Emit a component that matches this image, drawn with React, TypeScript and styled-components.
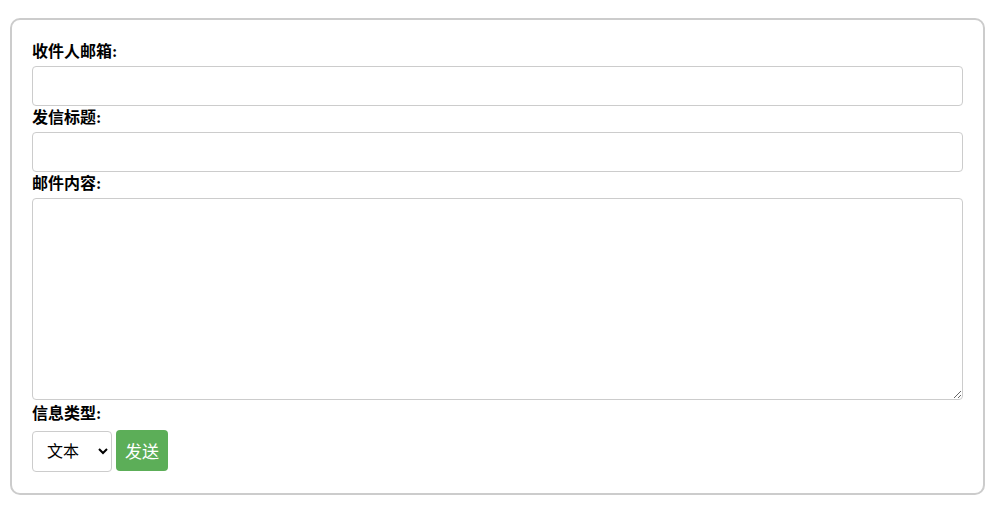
import styled, { createGlobalStyle } from "styled-components";

const GlobalStyle = createGlobalStyle`
  body {
    margin: 0;
    font-family: "Liberation Serif", "Noto Sans CJK SC", serif;
    background: #fff;
  }
`;

const Panel = styled.form`
  margin: 18px 9px 0 10px;
  padding: 20px 20px 21px;
  border: 2px solid #ccc;
  border-radius: 10px;
  display: flex;
  flex-direction: column;
`;

const Label = styled.label`
  display: block;
  font-size: 16px;
  font-weight: bold;
  line-height: 24px;
  color: #000;
  margin-bottom: 2px;
`;

const TextInput = styled.input`
  box-sizing: border-box;
  width: 100%;
  height: 40px;
  margin: 0;
  padding: 0 10px;
  border: 1px solid #ccc;
  border-radius: 4px;
  font-size: 16px;
  font-family: "Liberation Sans", "Noto Sans CJK SC", sans-serif;
`;

const TextArea = styled.textarea`
  display: block;
  box-sizing: border-box;
  width: 100%;
  height: 202px;
  margin: 0 0 2px;
  padding: 8px 10px;
  border: 1px solid #ccc;
  border-radius: 4px;
  font-size: 16px;
  font-family: "Liberation Sans", "Noto Sans CJK SC", sans-serif;
`;

const Actions = styled.div`
  display: flex;
  align-items: flex-start;
  gap: 4px;
  margin-top: 2px;
`;

const TypeSelect = styled.select`
  box-sizing: border-box;
  width: 80px;
  height: 41px;
  margin-top: 1px;
  padding: 0 6px 0 10px;
  border: 1px solid #ccc;
  border-radius: 4px;
  background: #fff;
  font-size: 16px;
  font-family: "Liberation Sans", "Noto Sans CJK SC", sans-serif;
  color: #000;
`;

const SendButton = styled.button`
  box-sizing: border-box;
  width: 52px;
  height: 41px;
  border: none;
  border-radius: 4px;
  background: #5cae58;
  color: #fff;
  font-size: 17px;
  font-family: "Liberation Sans", "Noto Sans CJK SC", sans-serif;
  cursor: pointer;
`;

export default function App() {
  return (
    <>
      <GlobalStyle />
      <Panel onSubmit={(e) => e.preventDefault()}>
        <Label htmlFor="to">收件人邮箱:</Label>
        <TextInput id="to" type="email" />
        <Label htmlFor="subject">发信标题:</Label>
        <TextInput id="subject" type="text" />
        <Label htmlFor="content">邮件内容:</Label>
        <TextArea id="content" />
        <Label htmlFor="type">信息类型:</Label>
        <Actions>
          <TypeSelect id="type" defaultValue="text">
            <option value="text">文本</option>
            <option value="html">HTML</option>
          </TypeSelect>
          <SendButton type="submit">发送</SendButton>
        </Actions>
      </Panel>
    </>
  );
}
